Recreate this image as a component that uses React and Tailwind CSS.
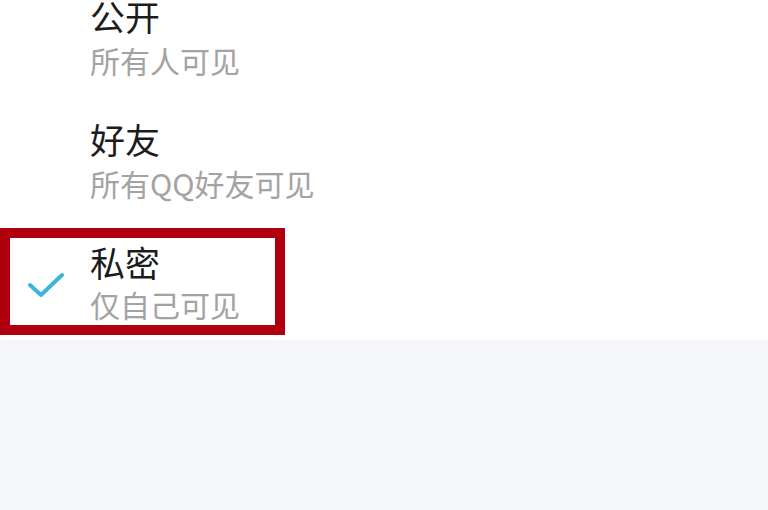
const options = [
  { title: '公开', desc: '所有人可见' },
  { title: '好友', desc: '所有QQ好友可见' },
];

const Check = () => (
  <svg width="36" height="26" viewBox="0 0 36 26" fill="none">
    <path d="M2 13 L13 23 L34 3" stroke="#3cb6dc" strokeWidth="4" strokeLinecap="round" strokeLinejoin="round" />
  </svg>
);

export default function App() {
  return (
    <div className="w-[768px] h-[510px] overflow-hidden bg-[#f5f6fa] font-['Noto_Sans_CJK_SC','Noto_Sans',sans-serif]">
      <div className="bg-white h-[340px] flex flex-col">
        {options.map((opt, i) => (
          <div key={i} className={`pl-[90px] h-[123px] flex flex-col ${i === 0 ? '-mt-[2px]' : ''}`}>
            <div className="text-[35px] leading-[36px] text-[#1c1c1c]">{opt.title}</div>
            <div className="mt-[11px] text-[30px] leading-[30px] text-[#a3a3a3]">{opt.desc}</div>
          </div>
        ))}
        {/* selected option, boxed */}
        <div className="-mt-[16px] w-[285px] h-[107px] shrink-0 border-[10px] border-[#b0000f] flex items-center">
          <div className="w-[80px] pl-[18px] flex items-center pt-[6px]">
            <Check />
          </div>
          <div className="flex flex-col">
            <div className="text-[35px] leading-[36px] text-[#1c1c1c]">私密</div>
            <div className="mt-[9px] text-[30px] leading-[30px] text-[#a3a3a3]">仅自己可见</div>
          </div>
        </div>
      </div>
    </div>
  );
}
